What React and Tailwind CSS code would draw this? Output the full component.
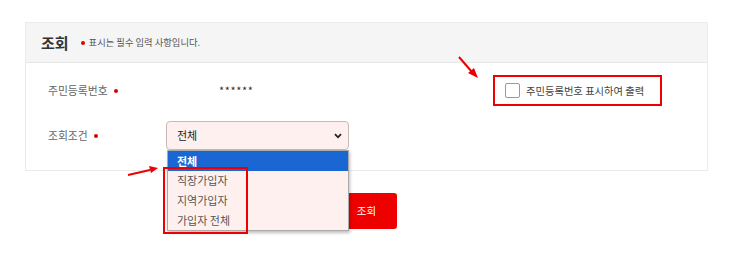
import React from "react";

function Dot() {
  return <span className="inline-block w-[4px] h-[4px] rounded-full bg-[#e00000] ml-[6px]" />;
}

export default function App() {
  return (
    <div className="relative w-[731px] h-[273px] bg-white overflow-hidden font-['Noto_Sans_CJK_KR',sans-serif]">
      <div className="pt-[22px] px-[25px] w-[733px]">
        <div className="w-[683px] border border-[#ebebeb]">
          <div className="h-[40px] bg-[#f5f5f5] border-b border-[#e6e6e6] flex items-center pl-[15px]">
            <span className="text-[15px] font-bold text-[#333] leading-none">조회</span>
            <span className="inline-block w-[4px] h-[4px] rounded-full bg-[#e00000] ml-[12px]" />
            <span className="text-[9.3px] text-[#555] ml-[4px] leading-none">표시는 필수 입력 사항입니다.</span>
          </div>
          <div className="pt-[12px] pb-[20px] flex flex-col gap-[15px]">
            <div className="h-[31px] flex items-center pl-[22px] pr-[45px]">
              <div className="w-[118px] text-[10.8px] text-[#666] flex items-center">
                주민등록번호<Dot />
              </div>
              <div className="ml-[53px] text-[11px] text-[#333] tracking-[0.6px]">******</div>
              <div className="ml-auto w-[169px] h-[31px] border-2 border-[#ee0000] flex items-center pl-[10px]">
                <span className="w-[15px] h-[15px] border border-[#999] rounded-[2px] bg-white" />
                <span className="ml-[6px] text-[10.3px] text-[#444]">주민등록번호 표시하여 출력</span>
              </div>
            </div>
            <div className="h-[29px] flex items-center pl-[22px]">
              <div className="w-[118px] text-[10.8px] text-[#666] flex items-center">
                조회조건<Dot />
              </div>
              <div className="relative w-[183px] h-[29px]">
                <div className="w-full h-full bg-[#fff0f0] border border-[#c9b9b9] rounded-[4px] flex items-center pl-[10px] pr-[6px]">
                  <span className="text-[11px] text-[#222]">전체</span>
                  <svg className="ml-auto" width="8" height="6" viewBox="0 0 8 6">
                    <path d="M1 1.2 L4 4.3 L7 1.2" fill="none" stroke="#222" strokeWidth="1.8" />
                  </svg>
                </div>
                <div className="absolute left-[1px] top-[29px] w-[182px] h-[81px] bg-[#fff0f0] border border-[#aaa] shadow-[1px_2px_3px_rgba(0,0,0,0.25)] z-10 flex flex-col">
                  <div className="h-[20px] bg-[#1a66d2] text-white text-[11px] font-bold flex items-center pl-[9px]">전체</div>
                  <div className="h-[20px] text-[#555] text-[11px] flex items-center pl-[9px]">직장가입자</div>
                  <div className="h-[20px] text-[#555] text-[11px] flex items-center pl-[9px]">지역가입자</div>
                  <div className="h-[20px] text-[#555] text-[11px] flex items-center pl-[9px]">가입자 전체</div>
                </div>
              </div>
            </div>
          </div>
        </div>
        <div className="w-[683px] flex justify-center pt-[22px]">
          <button className="w-[61px] h-[36px] bg-[#ee0000] rounded-[3px] text-white text-[10.5px]">조회</button>
        </div>
      </div>

      <div className="absolute left-[163px] top-[167px] w-[85px] h-[67px] border-2 border-[#ee0000] z-20 pointer-events-none" />

      <svg className="absolute left-0 top-0 z-30 pointer-events-none" width="731" height="273">
        <line x1="459" y1="57" x2="472" y2="72" stroke="#ee0000" strokeWidth="2" />
        <polygon points="478,78 468,73 474,68" fill="#ee0000" />
        <line x1="128" y1="175" x2="150" y2="170" stroke="#ee0000" strokeWidth="2" />
        <polygon points="158,168 149,166 151,173" fill="#ee0000" />
      </svg>
    </div>
  );
}
